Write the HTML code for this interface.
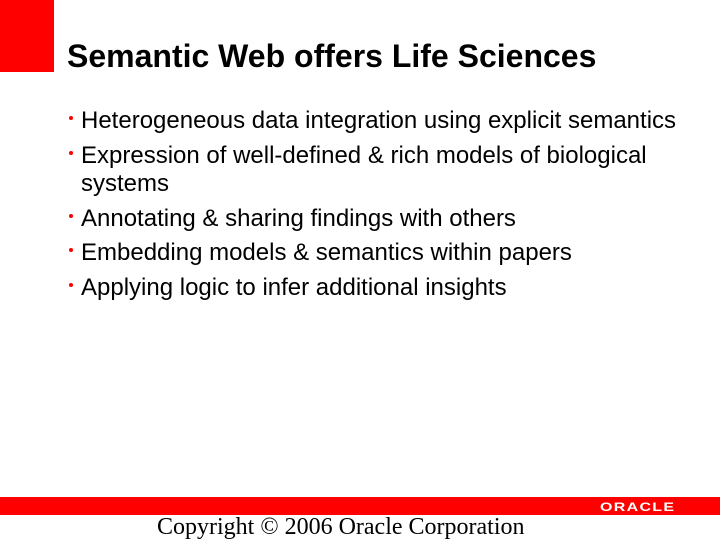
<!DOCTYPE html>
<html><head><style>
body{margin:0;width:720px;height:540px;background:#fff;position:relative;overflow:hidden;font-family:"Liberation Sans",Arial,sans-serif}
.blk{position:absolute;left:0;top:0;width:54px;height:72px;background:#f00}
h1{position:absolute;left:67px;top:37px;margin:0;font-size:32px;line-height:38px;font-weight:bold;color:#000;white-space:nowrap}
.b{position:absolute;left:81px;font-size:24px;color:#000;white-space:nowrap;line-height:28px}
.b:before{content:"";position:absolute;left:-12px;top:9px;width:4px;height:4px;border-radius:50%;background:#f00}
.nb:before{display:none}
.bar{position:absolute;left:0;top:497px;width:720px;height:18px;background:#f00}
.or{position:absolute;left:600px;top:500px;color:#fff;font-size:12px;font-weight:bold;letter-spacing:1px;transform:scaleX(1.33);transform-origin:left}
.cp{position:absolute;left:157px;top:514px;font-family:"Liberation Serif",serif;font-size:24px;white-space:nowrap}
</style></head><body>
<div class="blk"></div>
<h1>Semantic Web offers Life Sciences</h1>
<div class="b" style="top:107px">Heterogeneous data integration using explicit semantics</div>
<div class="b" style="top:142px">Expression of well-defined &amp; rich models of biological</div>
<div class="b nb" style="top:170px">systems</div>
<div class="b" style="top:205px">Annotating &amp; sharing findings with others</div>
<div class="b" style="top:239px">Embedding models &amp; semantics within papers</div>
<div class="b" style="top:274px">Applying logic to infer additional insights</div>
<div class="bar"></div>
<div class="or">ORACLE</div>
<div class="cp">Copyright © 2006 Oracle Corporation</div>
</body></html>
